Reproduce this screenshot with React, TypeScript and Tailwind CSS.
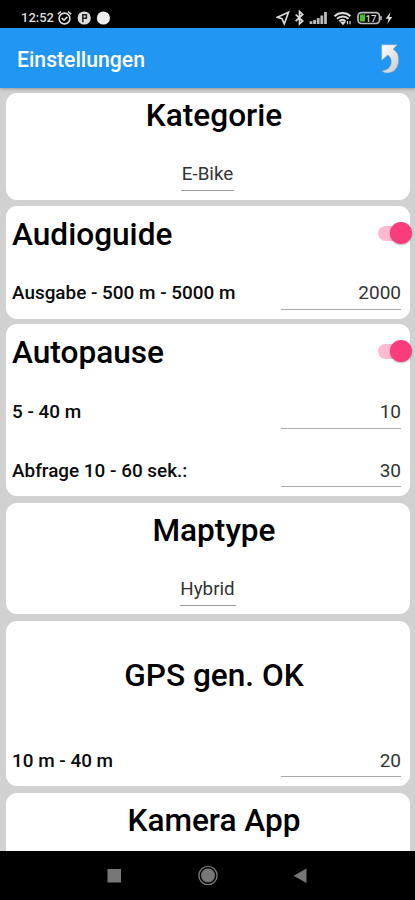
import type { ReactNode } from "react";

function Card({ className, children }: { className: string; children?: ReactNode }) {
  return <section className={`shrink-0 rounded-[11px] bg-white ${className}`}>{children}</section>;
}

function Title({ className, children }: { className: string; children: ReactNode }) {
  return (
    <h2 className={`flex items-center whitespace-nowrap text-[31.6px] font-medium ${className}`}>{children}</h2>
  );
}

function Toggle() {
  return (
    <span className="mr-[-2px] mt-[-3px] flex h-[22px] w-[34px] items-center">
      <span className="flex h-[15px] w-[29px] items-center justify-end rounded-full bg-[#ffb9d3]">
        <span className="mr-[-5px] size-[22px] shrink-0 rounded-full bg-[#fb3c7c] shadow-[0_1px_2px_rgba(0,0,0,0.3)]" />
      </span>
    </span>
  );
}

function Choice({ className, children }: { className: string; children: ReactNode }) {
  return (
    <div className="flex justify-center pr-px">
      <span className={`h-[31px] whitespace-nowrap border-b border-[#999] text-center text-[18.8px] leading-[28px] text-[#333] ${className}`}>
        {children}
      </span>
    </div>
  );
}

function Row({ label, value, className }: { label: string; value: string; className: string }) {
  return (
    <div className={`flex h-[31px] justify-between pl-1.5 pr-[9px] ${className}`}>
      <span className="whitespace-nowrap text-[18.9px] font-medium text-[#0a0a0a]">{label}</span>
      <span className="w-[120px] border-b border-[#aaa] text-right text-[19px] text-[#333]">
        {value}
      </span>
    </div>
  );
}

function StatusBar() {
  return (
    <div className="flex h-7 shrink-0 items-center bg-black pl-[21px] pt-2 text-[#ddd]">
      <span className="w-9 text-[13px] font-medium leading-5">12:52</span>
      <svg width="60" height="20" viewBox="0 0 60 20" fill="none" stroke="#ddd" strokeWidth="1.6">
        <circle cx="7.5" cy="10.5" r="5.4" />
        <path d="M4.7 10l2.3 2.2 3.4-3.3M.8 6.2L4 3.5M14.2 6.2L11 3.5" />
        <circle cx="27.2" cy="10" r="6.6" fill="#ddd" stroke="none" />
        <path d="M25.8 14.2V6.8h3.6v3.4h-3.4" stroke="#222" strokeWidth="1.5" />
        <circle cx="46.4" cy="10" r="6.6" fill="#eee" stroke="none" />
      </svg>
      <svg className="ml-auto mr-[22px]" width="117" height="20" viewBox="0 0 117 20" fill="none" stroke="#ddd" strokeWidth="1.6">
        <path d="M1.3 9.3L12.5 4.2 8.3 15.8 6 10.7z" />
        <path d="M19.7 6.5l7 6.6-3.2 2.8V3.4l3.2 3-7 6.7" strokeWidth="1.7" />
        <path d="M35 16v-2.8M38.6 16v-4M42.2 16v-6M45.8 16V7.5M49.5 16V4" strokeWidth="2.8" stroke="#bbb" />
        <path d="M58.5 8.2c4.5-4.2 11.5-4.2 16 0M61 10.8c3.3-3 8.3-3 11.6 0M63.3 13.2c2-1.8 4.5-1.8 6 0" strokeWidth="2" />
        <path d="M65 14h4l-2 2.3zM71.5 13v3.3M74 13v3.3" fill="#ddd" strokeWidth="1.2" />
        <rect x="82" y="4.7" width="21.5" height="10.8" rx="3.5" strokeWidth="1.7" stroke="#bbb" />
        <path d="M105 8v4" stroke="#bbb" />
        <path d="M84 6.5h5v7h-5z" fill="#45c52d" stroke="none" />
        <text x="89.5" y="13.5" fill="#ddd" stroke="none" fontSize="9.5" fontWeight="500">17</text>
        <path d="M114.5 4.2l-4.9 6.5h3l-1.3 5.2 5-6.8h-3z" fill="#ddd" stroke="none" />
      </svg>
    </div>
  );
}

function AppBar() {
  return (
    <header className="z-10 flex h-[60px] shrink-0 items-center justify-between bg-[#2196f3] pl-[17px] pr-4 pt-[3px] shadow-[0_1px_3px_rgba(0,0,0,0.3)]">
      <h1 className="text-[21.2px] font-medium leading-7 text-white">Einstellungen</h1>
      <svg width="18" height="30" viewBox="0 0 18 30" className="mt-[-2px]">
        <defs>
          <linearGradient id="arrow" x1="0" y1="0" x2="0.6" y2="1">
            <stop offset="0" stopColor="#fff" />
            <stop offset="1" stopColor="#d2d2d2" />
          </linearGradient>
        </defs>
        <path
          d="M.7.8H16.3L12 5.2C16 7.5 17.6 11 17.6 15.5 17.6 23.5 13.5 28.7 7 28.9 4.5 29 2.3 28.3 1 27 7.5 26 10.5 22.3 10.3 17.5 10.2 14.6 9 12.6 6.9 10.9L.7 16.3z"
          fill="url(#arrow)"
          stroke="#8aa5b5"
          strokeWidth=".5"
        />
      </svg>
    </header>
  );
}

function NavBar() {
  return (
    <nav className="flex h-[49px] shrink-0 bg-black">
      <svg width="415" height="49" viewBox="0 0 415 49" fill="#777">
        <rect x="107.5" y="18" width="13.5" height="13.5" />
        <circle cx="208" cy="24.5" r="7" />
        <circle cx="208" cy="24.5" r="9.1" fill="none" stroke="#777" strokeWidth="1.4" />
        <path d="M293.5 24.7L306.5 17.5V32z" />
      </svg>
    </nav>
  );
}

export default function App() {
  return (
    <div className="flex h-[900px] w-[415px] flex-col overflow-hidden bg-[#d1d1d1] font-[Roboto,sans-serif] text-black">
      <StatusBar />
      <AppBar />
      <main className="flex min-h-0 flex-1 flex-col overflow-hidden pl-1.5 pr-[5px] pt-[5px]">
        <Card className="mb-1.5 h-[107px]">
          <Title className="h-[46px] justify-center pl-3">Kategorie</Title>
          <div className="h-[21px]" />
          <Choice className="w-[53px]">E-Bike</Choice>
        </Card>
        <Card className="mb-[5px] h-[113px]">
          <div className="flex items-center justify-between pl-1.5">
            <Title className="h-[57px]">Audioguide</Title>
            <Toggle />
          </div>
          <Row className="mt-4 leading-[27px]" label="Ausgabe - 500 m - 5000 m" value="2000" />
        </Card>
        <Card className="mb-[7px] h-[172px]">
          <div className="flex items-center justify-between pl-1.5">
            <Title className="h-[57px]">Autopause</Title>
            <Toggle />
          </div>
          <Row className="mt-[17px] leading-[27px]" label="5 - 40 m" value="10" />
          <Row className="mt-[27px] leading-[29px]" label="Abfrage 10 - 60 sek.:" value="30" />
        </Card>
        <Card className="mb-[7px] h-[111px]">
          <Title className="h-[55px] justify-center pl-3">Maptype</Title>
          <div className="h-[17px]" />
          <Choice className="w-14">Hybrid</Choice>
        </Card>
        <Card className="mb-[7px] h-[165px]">
          <Title className="h-[109px] justify-center pl-3">GPS gen. OK</Title>
          <Row className="mt-4 leading-[29px]" label="10 m - 40 m" value="20" />
        </Card>
        <Card className="h-[111px]">
          <Title className="h-[55px] justify-center pl-3">Kamera App</Title>
        </Card>
      </main>
      <NavBar />
    </div>
  );
}
